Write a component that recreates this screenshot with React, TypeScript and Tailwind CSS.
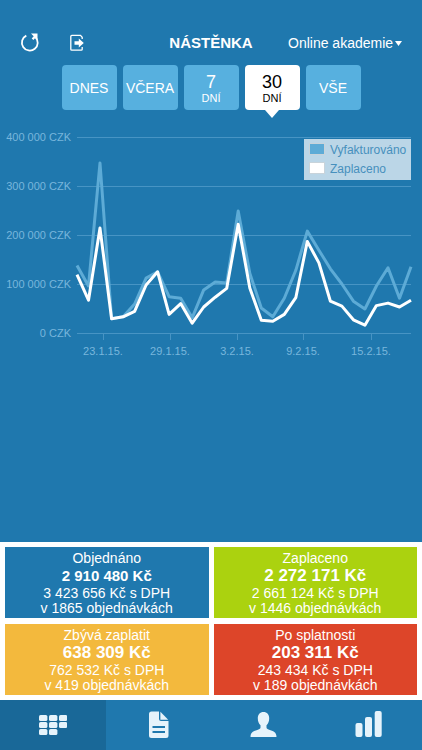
import { useState } from "react";

const ranges = [
  { id: "today", big: "DNES" },
  { id: "yesterday", big: "VČERA" },
  { id: "week", big: "7", small: "DNÍ" },
  { id: "month", big: "30", small: "DNÍ" },
  { id: "all", big: "VŠE" },
];

const invoiced = [
  138, 96, 347, 29, 33, 59, 112, 125, 74, 71, 31, 88, 104, 102, 249, 122, 51, 33, 71, 128, 208, 169, 131, 100, 65, 49,
  96, 133, 71, 135,
];
const paid = [
  119, 67, 214, 29, 33, 44, 98, 125, 38, 60, 20, 53, 73, 91, 222, 92, 26, 24, 38, 72, 187, 143, 65, 55, 27, 16, 56, 61,
  53, 67,
];

const yTicks = [400, 300, 200, 100, 0];
const xTicks = [
  { x: 103, label: "23.1.15." },
  { x: 170, label: "29.1.15." },
  { x: 237, label: "3.2.15." },
  { x: 303, label: "9.2.15." },
  { x: 371, label: "15.2.15." },
];

const yOf = (v: number) => 205 - (v * 196) / 400;
const toPoints = (data: number[]) =>
  data.map((v, i) => `${(77 + (i * 334) / (data.length - 1)).toFixed(1)},${yOf(v).toFixed(1)}`).join(" ");

const tiles = [
  { title: "Objednáno", total: "2 910 480 Kč", vat: "3 423 656 Kč s DPH", orders: "v 1865 objednávkách", bg: "bg-[#1f78ae]", size: "text-[15px]" },
  { title: "Zaplaceno", total: "2 272 171 Kč", vat: "2 661 124 Kč s DPH", orders: "v 1446 objednávkách", bg: "bg-[#abd20f]", size: "text-[17px]" },
  { title: "Zbývá zaplatit", total: "638 309 Kč", vat: "762 532 Kč s DPH", orders: "v 419 objednávkách", bg: "bg-[#f3b93d]", size: "text-[17px]" },
  { title: "Po splatnosti", total: "203 311 Kč", vat: "243 434 Kč s DPH", orders: "v 189 objednávkách", bg: "bg-[#dd4529]", size: "text-[17px]" },
];

function RefreshIcon() {
  return (
    <svg width="20" height="20" viewBox="0 0 20 20" fill="none" aria-hidden="true">
      <path d="M6.3 2.6A7.900 7.900 0 1 0 15.300 4" stroke="white" strokeWidth="1.8" />
      <path d="M11 .4h6.500v6l-2.100-1.700-2 2.400-1.700-1.500 2-2.300z" fill="white" />
    </svg>
  );
}

function LogoutIcon() {
  return (
    <svg width="16" height="18" viewBox="0 0 16 18" fill="none" aria-hidden="true">
      <path d="M13.200 5V3.200L11.500 1.400H2.800a1 1 0 0 0-1 1v12.800a1 1 0 0 0 1 1h9.400a1 1 0 0 0 1-1V13" stroke="white" strokeWidth="1.3" />
      <path d="M5.500 7.200h4.300V4.600L14.800 9l-5 4.400v-2.600H5.500z" fill="white" />
    </svg>
  );
}

function GridIcon() {
  const cells = [[0, 0], [10, 0], [20, 0], [0, 7], [10, 7], [20, 7], [0, 14], [10, 14]];
  return (
    <svg width="28" height="28" viewBox="0 0 28 28" fill="#e6f3fb" aria-hidden="true">
      {cells.map(([x, y]) => (
        <rect key={`${x}-${y}`} x={x} y={y + 4} width="8.400" height="6" rx="1.6" />
      ))}
    </svg>
  );
}

function DocumentIcon() {
  return (
    <svg width="28" height="28" viewBox="0 0 28 28" aria-hidden="true">
      <path d="M7.500 0.500H15V8a2 2 0 0 0 2 2h7.500V24.500a2.500 2.500 0 0 1-2.500 2.500H7.500A2.500 2.500 0 0 1 5 24.500V3A2.500 2.500 0 0 1 7.500 0.500z" fill="#e6f3fb" />
      <path d="M16.400 0.800l7.800 7.900h-7.800z" fill="#e6f3fb" />
      <path d="M8.500 16H21M8.500 21H21" stroke="#1f78ae" strokeWidth="1.800" />
    </svg>
  );
}

function PersonIcon() {
  return (
    <svg width="28" height="28" viewBox="0 0 28 28" fill="#e6f3fb" aria-hidden="true">
      <path d="M13.500 1c3.600 0 5.700 2.700 5.700 6.300 0 3-1 5.500-2.700 7v2.200c0 1.200 1 1.700 2.600 2.200 4 1.200 7.400 2.300 7.400 7.300H0.500c0-5 3.400-6.100 7.400-7.300 1.600-.5 2.600-1 2.600-2.200v-2.200c-1.700-1.500-2.700-4-2.700-7C7.800 3.700 9.900 1 13.500 1z" />
    </svg>
  );
}

function BarsIcon() {
  return (
    <svg width="28" height="28" viewBox="0 0 28 28" fill="#e6f3fb" aria-hidden="true">
      <rect x="0.500" y="12" width="7" height="14" rx="2" />
      <rect x="10" y="6" width="7" height="20" rx="2" />
      <rect x="19.700" y="0" width="7" height="26" rx="2" />
    </svg>
  );
}

const tabs = [
  { label: "Nástěnka", icon: GridIcon },
  { label: "Objednávky", icon: DocumentIcon },
  { label: "Zákazníci", icon: PersonIcon },
  { label: "Statistiky", icon: BarsIcon },
];

function SalesChart() {
  return (
    <svg viewBox="0 0 422 240" className="block w-full" role="img" aria-label="Vyfakturováno a zaplaceno">
      {yTicks.map((t) => (
        <g key={t}>
          <line x1="77" x2="411" y1={yOf(t) + 0.5} y2={yOf(t) + 0.5} stroke="#4794c4" strokeWidth="1.200" />
          <text x="71" y={yOf(t) + 4} textAnchor="end" fontSize="11" fill="#78b6dc">
            {t === 0 ? "0 CZK" : `${t} 000 CZK`}
          </text>
        </g>
      ))}
      {xTicks.map((t) => (
        <g key={t.label}>
          <line x1={t.x + 0.5} x2={t.x + 0.5} y1="205" y2="212" stroke="#4794c4" />
          <text x={t.x} y="227" textAnchor="middle" fontSize="11" fill="#78b6dc">
            {t.label}
          </text>
        </g>
      ))}
      <polyline points={toPoints(invoiced)} fill="none" stroke="#5dabd6" strokeWidth="3" strokeLinejoin="round" />
      <polyline points={toPoints(paid)} fill="none" stroke="white" strokeWidth="3" strokeLinejoin="round" />
      <rect x="304" y="11" width="107" height="41" fill="#bbd6e7" />
      <rect x="309" y="15" width="16" height="12" fill="#c8d3da" />
      <rect x="310" y="16" width="14" height="10" fill="#5dabd6" />
      <rect x="309" y="34" width="16" height="12" fill="#c8d3da" />
      <rect x="310" y="35" width="14" height="10" fill="white" />
      <g fontSize="12" fill="#4790bd">
        <text x="330" y="26">Vyfakturováno</text>
        <text x="330" y="45">Zaplaceno</text>
      </g>
    </svg>
  );
}

export default function App() {
  const [active, setActive] = useState("month");
  return (
    <div className="flex min-h-screen flex-col bg-[#1f78ae] font-['Liberation_Sans',Arial,sans-serif] text-white">
      <header className="grid h-[65px] grid-cols-[1fr_auto_1fr] items-center pt-5 pr-5 pl-5">
        <div className="flex items-center gap-[29px]">
          <button type="button" aria-label="Obnovit">
            <RefreshIcon />
          </button>
          <button type="button" aria-label="Odhlásit">
            <LogoutIcon />
          </button>
        </div>
        <h1 className="pt-[2px] text-[15px] font-bold">NÁSTĚNKA</h1>
        <div className="relative justify-self-end">
          <select aria-label="Projekt" className="block appearance-none bg-transparent pr-2 text-sm outline-none">
            <option>Online akademie</option>
          </select>
          <svg className="pointer-events-none absolute top-2 right-0" width="7" height="5" viewBox="0 0 7 5" aria-hidden="true">
            <path d="M0 0h7L3.500 5z" fill="white" />
          </svg>
        </div>
      </header>

      <main className="flex flex-1 flex-col">
        <div className="flex justify-center gap-[6px]">
          {ranges.map((r) => (
            <button
              key={r.id}
              type="button"
              aria-pressed={active === r.id}
              onClick={() => setActive(r.id)}
              className={`relative flex h-[45px] w-[55px] flex-col items-center justify-center rounded ${
                active === r.id ? "bg-white text-black" : "bg-[#57b0df]"
              }`}
            >
              <span className={r.small ? "pt-[2px] text-lg leading-[18px]" : "text-sm leading-[18px]"}>{r.big}</span>
              {r.small && <span className="text-[11px] leading-[14px]">{r.small}</span>}
              {active === r.id && (
                <svg className="absolute top-full" width="14" height="8" viewBox="0 0 14 8" aria-hidden="true">
                  <path d="M0 0h14L7 8z" fill="white" />
                </svg>
              )}
            </button>
          ))}
        </div>
        <div className="pt-[18px]">
          <SalesChart />
        </div>
      </main>

      <section className="grid grid-cols-2 gap-x-[5px] gap-y-[6px] bg-white p-[5px]">
        {tiles.map((t) => (
          <div key={t.title} className={`py-[3px] text-center text-sm leading-4 ${t.bg}`}>
            <h2>{t.title}</h2>
            <p className={`leading-5 font-bold ${t.size}`}>{t.total}</p>
            <p className="leading-[15px]">{t.vat}</p>
            <p className="leading-[14px]">{t.orders}</p>
          </div>
        ))}
      </section>

      <nav className="grid h-[50px] grid-cols-4">
        {tabs.map(({ label, icon: Icon }, i) => (
          <a
            key={label}
            href="#"
            aria-label={label}
            aria-current={i === 0 ? "page" : undefined}
            className={`flex items-center justify-center ${i === 0 ? "bg-[#196898]" : ""}`}
          >
            <Icon />
          </a>
        ))}
      </nav>
    </div>
  );
}
